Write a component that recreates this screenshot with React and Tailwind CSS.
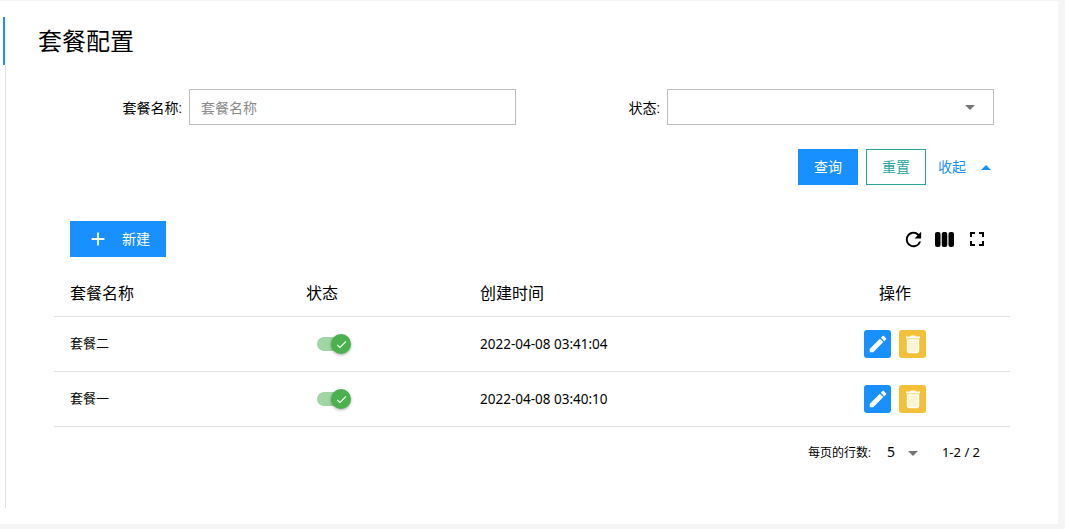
import React from 'react';
import { MdRefresh, MdFullscreen, MdEdit, MdCheck, MdAdd } from 'react-icons/md';

const rows = [
  { name: '套餐二', time: '2022-04-08 03:41:04' },
  { name: '套餐一', time: '2022-04-08 03:40:10' },
];

function Caret({ className }) {
  return <span className={`w-0 h-0 border-x-[5px] border-x-transparent ${className}`} />;
}

function Toggle() {
  return (
    <div className="flex items-center w-[34px] h-[20px]">
      <div className="w-[28px] h-[14px] rounded-full bg-[#a1d5a3]" />
      <div className="w-[20px] h-[20px] -ml-[14px] rounded-full bg-[#4caf50] shadow-[0_1px_3px_rgba(0,0,0,0.35)] flex items-center justify-center">
        <MdCheck className="text-white" size={13} />
      </div>
    </div>
  );
}

function Trash() {
  return (
    <svg width="18" height="20" viewBox="0 0 18 20">
      <path d="M2 2.5h4l1-1h4l1 1h4v2H2z" fill="#fff" />
      <path d="M3.5 6h11v10.5a2 2 0 0 1-2 2h-7a2 2 0 0 1-2-2z" fill="#fdf4d6" stroke="#fff" strokeWidth="1.4" />
    </svg>
  );
}

function Row({ name, time }) {
  return (
    <div className="flex items-center h-[55px] border-b border-[#e0e0e0] text-[13px] text-black">
      <div className="w-[263px] pl-4">{name}</div>
      <div className="w-[163px]"><Toggle /></div>
      <div className="w-[384px] text-[13.5px]" style={{ fontFamily: '"Noto Sans", sans-serif' }}>{time}</div>
      <div className="flex gap-2">
        <button className="w-[27px] h-[28px] rounded-[3px] bg-[#1890ff] flex items-center justify-center text-white"><MdEdit size={22} /></button>
        <button className="w-[27px] h-[28px] rounded-[3px] bg-[#f3c139] flex items-center justify-center"><Trash /></button>
      </div>
    </div>
  );
}

export default function App() {
  return (
    <div className="h-[529px] bg-[#f5f5f5] pt-px" style={{ fontFamily: 'Roboto, "Noto Sans CJK SC", sans-serif' }}>
      <div className="w-[1058px] h-[523px] bg-white pt-4 pl-[3px]">
        <div className="h-[48px] border-l-2 border-[#1890ff] pl-[33px] pt-[2px] flex items-center text-[24px] text-black leading-none">
          套餐配置
        </div>
        <div className="ml-[2px] h-[443px] border-l border-[#e0e0e0]">
          <div className="flex items-center pt-6 text-[14px] text-black">
            <div className="w-[176px] text-right pt-[2px]">套餐名称:</div>
            <input
              placeholder="套餐名称"
              className="ml-[7px] w-[327px] h-[36px] border border-[#bdbdbd] pl-[11px] pr-3 pt-[2px] text-[14px] placeholder:text-[#8a8a8a] outline-none"
            />
            <div className="w-[144px] text-right pt-[2px]">状态:</div>
            <div className="ml-[7px] w-[327px] h-[36px] border border-[#bdbdbd] flex items-center justify-end pr-[18px]">
              <Caret className="border-t-[5px] border-t-[#757575]" />
            </div>
          </div>

          <div className="flex items-center mt-6 ml-[792px] text-[14px]">
            <button className="w-[60px] h-[36px] bg-[#1890ff] text-white">查询</button>
            <button className="ml-2 w-[60px] h-[36px] border border-[#26a69a] text-[#26a69a]">重置</button>
            <span className="ml-3 text-[#1890ff]">收起</span>
            <Caret className="ml-[15px] border-b-[5px] border-b-[#1890ff]" />
          </div>

          <div className="flex items-center justify-between mt-9 ml-[64px] w-[920px]">
            <button className="w-[96px] h-[36px] bg-[#1890ff] text-white text-[14px] flex items-center pl-[17px]">
              <MdAdd size={22} />
              <span className="ml-[13px]">新建</span>
            </button>
            <div className="flex items-center gap-[9px] text-black -ml-1">
              <MdRefresh size={23} />
              <svg width="23" height="23" viewBox="0 0 23 23" fill="currentColor" className="-ml-px">
                <rect x="2" y="4" width="5.5" height="15" rx="2" />
                <rect x="8.75" y="4" width="5.5" height="15" rx="2" />
                <rect x="15.5" y="4" width="5.5" height="15" rx="2" />
              </svg>
              <MdFullscreen size={24} className="mr-px" />
            </div>
          </div>

          <div className="ml-[48px] w-[956px] mt-[13px]">
            <div className="flex items-center h-[47px] pt-[2px] border-b border-[#e0e0e0] text-[16px] text-black">
              <div className="w-[252px] pl-4">套餐名称</div>
              <div className="w-[174px]">状态</div>
              <div className="w-[384px]">创建时间</div>
              <div className="w-[62px] text-center">操作</div>
            </div>
            {rows.map(r => <Row key={r.name} {...r} />)}
            <div className="flex items-center h-[52px] text-[12px] text-black pl-[754px]">
              <span>每页的行数:</span>
              <span className="ml-[16px] text-[14px] -mt-[3px]" style={{ fontFamily: '"Noto Sans", sans-serif' }}>5</span>
              <Caret className="ml-[13px] border-t-[5px] border-t-[#757575]" />
              <span className="ml-[24px] text-[13px]" style={{ fontFamily: '"Noto Sans", sans-serif' }}>1-2 / 2</span>
            </div>
          </div>
        </div>
      </div>
    </div>
  );
}
